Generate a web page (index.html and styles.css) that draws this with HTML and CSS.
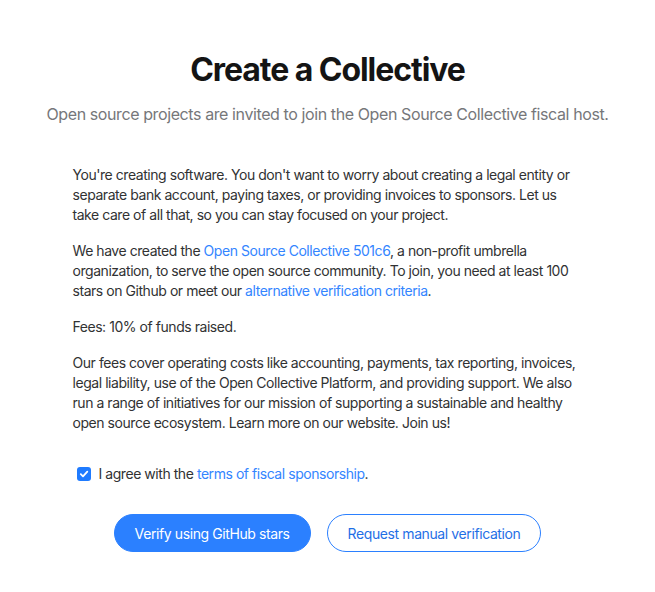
FILE: index.html
```html
<!DOCTYPE html>
<html>
<head>
<meta charset="utf-8">
<link rel="stylesheet" href="styles.css">
</head>
<body>
<main class="page">
  <h1 class="title">Create a Collective</h1>
  <p class="subtitle">Open source projects are invited to join the Open Source Collective fiscal host.</p>
  <section class="content">
    <p>You're creating software. You don't want to worry about creating a legal entity or separate bank account, paying taxes, or providing invoices to sponsors. Let us take care of all that, so you can stay focused on your project.</p>
    <p>We have created the <a href="#">Open Source Collective 501c6</a>, a non-profit umbrella organization, to serve the open source community. To join, you need at least 100 stars on Github or meet our <a href="#">alternative verification criteria</a>.</p>
    <p>Fees: 10% of funds raised.</p>
    <p>Our fees cover operating costs like accounting, payments, tax reporting, invoices, legal liability, use of the Open Collective Platform, and providing support. We also run a range of initiatives for our mission of supporting a sustainable and healthy open source ecosystem. Learn more on our website. Join us!</p>
    <label class="agree">
      <span class="check"><svg width="10" height="10" viewBox="0 0 10 10"><path d="M1.8 5.2 L4 7.3 L8.3 2.7" fill="none" stroke="#fff" stroke-width="1.8" stroke-linecap="round" stroke-linejoin="round"/></svg></span>
      <span>I agree with the <a href="#">terms of fiscal sponsorship</a>.</span>
    </label>
  </section>
  <div class="actions">
    <button class="btn primary">Verify using GitHub stars</button>
    <button class="btn secondary">Request manual verification</button>
  </div>
</main>
</body>
</html>
```
FILE: styles.css
```css
* { box-sizing: border-box; }
body {
  margin: 0;
  background: #fff;
  font-family: Inter, "Noto Sans", sans-serif;
  color: #313233;
}
.page {
  display: flex;
  flex-direction: column;
  align-items: center;
  padding-top: 50px;
}
.title {
  margin: 0;
  font-size: 32px;
  line-height: 40px;
  font-weight: 700;
  letter-spacing: -1.05px;
  color: #141414;
}
.subtitle {
  margin: 12px 0 0;
  font-size: 16px;
  line-height: 24px;
  letter-spacing: -0.4px;
  color: #76777a;
}
.content {
  width: 510px;
  margin-top: 39px;
  font-size: 14px;
  line-height: 20px;
  letter-spacing: -0.45px;
}
.content p {
  margin: 0 0 16px;
}
a {
  color: #3385ff;
  text-decoration: none;
}
.agree {
  display: flex;
  align-items: center;
  gap: 8px;
  margin-top: 31px;
  padding-left: 4px;
  font-size: 14px;
  line-height: 20px;
}
.check {
  width: 14px;
  height: 14px;
  border-radius: 3px;
  background: #1f7bff;
  display: flex;
  align-items: center;
  justify-content: center;
}
.actions {
  display: flex;
  gap: 16px;
  margin-top: 30px;
}
.btn {
  height: 38px;
  border-radius: 100px;
  font-family: Inter, "Noto Sans", sans-serif;
  font-size: 14px;
  font-weight: 400;
  letter-spacing: -0.4px;
  padding: 0 20px;
  cursor: pointer;
}
.primary {
  background: #2b80ff;
  border: 1px solid #2b80ff;
  color: #fff;
}
.secondary {
  background: #fff;
  border: 1px solid #2b80ff;
  color: #1f6fe6;
}
```
